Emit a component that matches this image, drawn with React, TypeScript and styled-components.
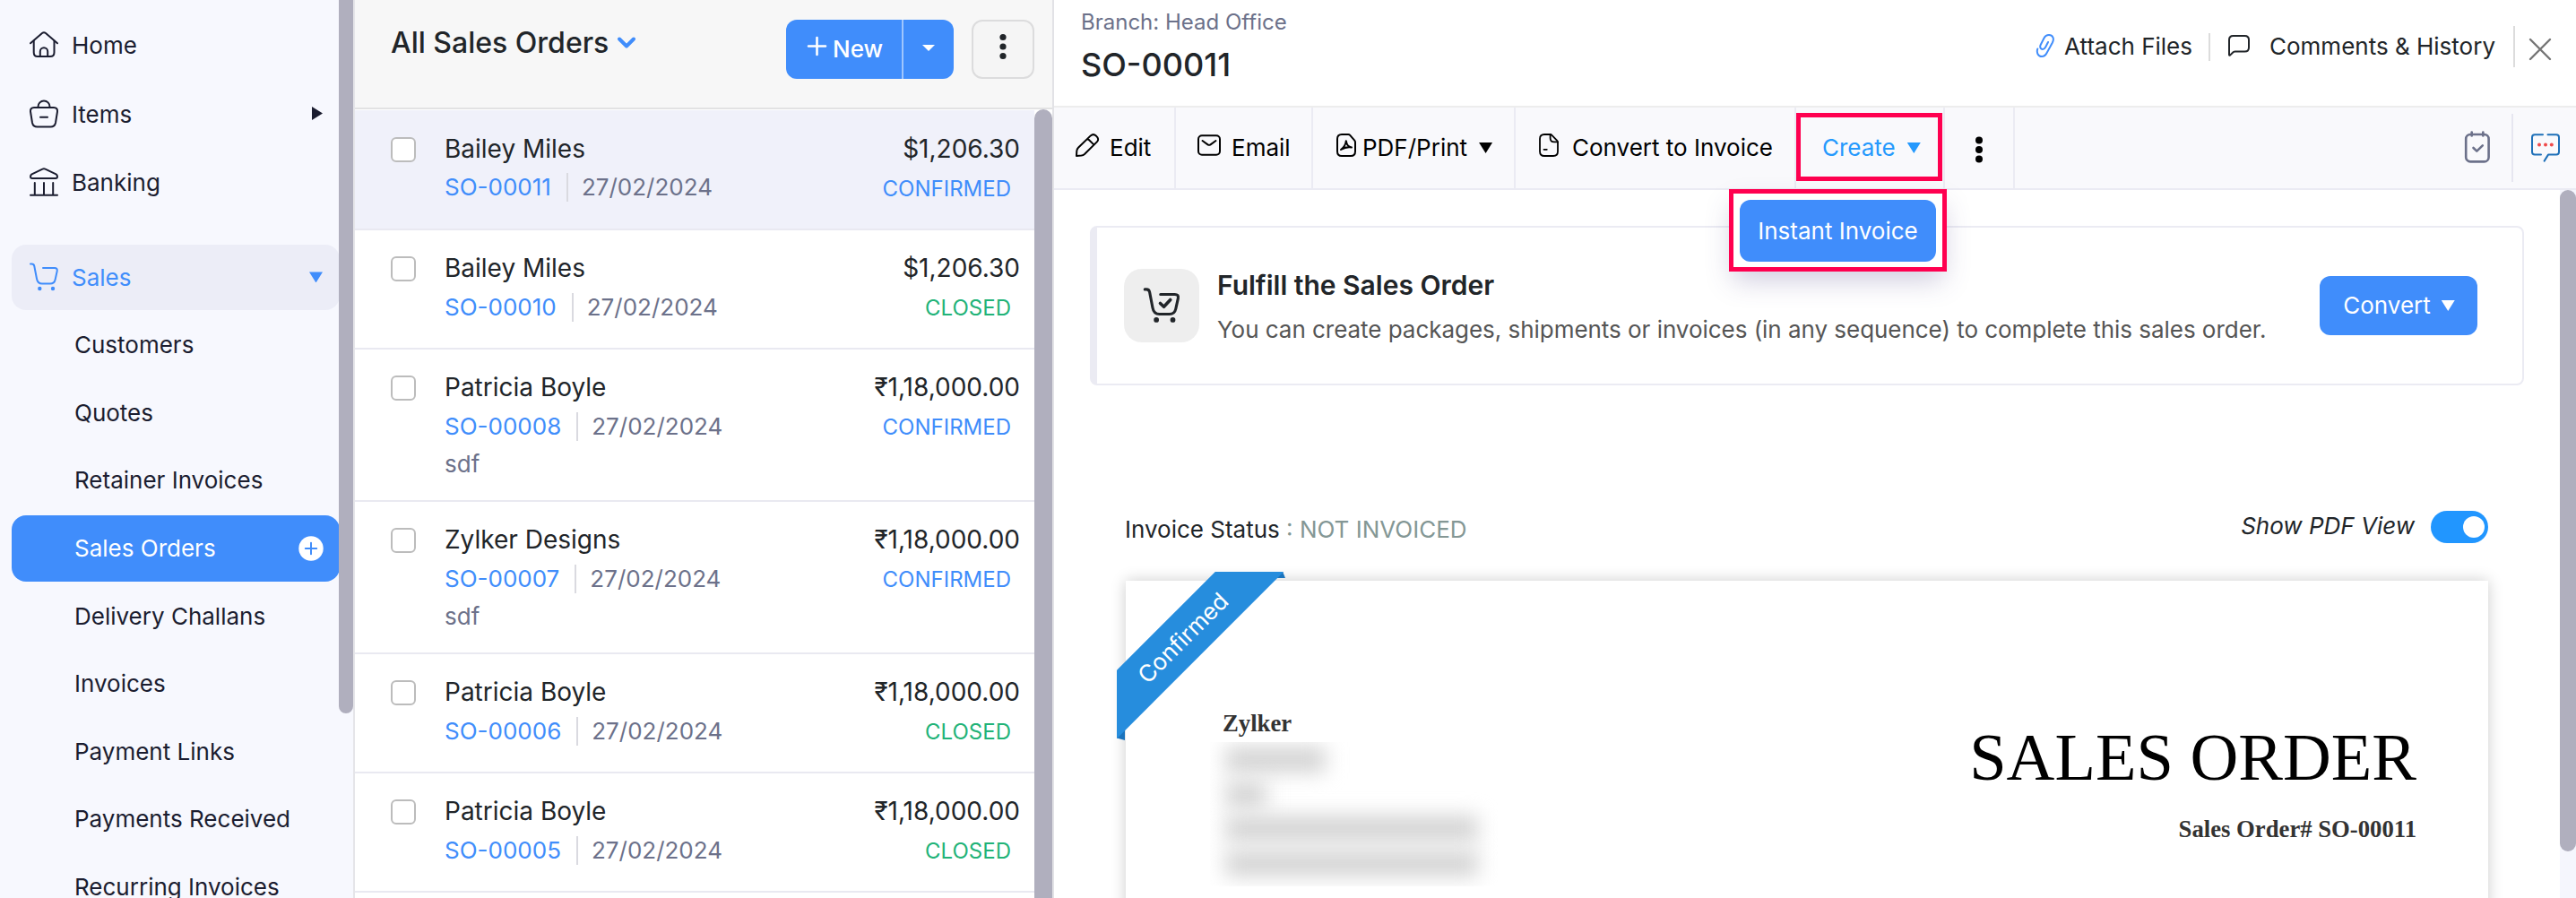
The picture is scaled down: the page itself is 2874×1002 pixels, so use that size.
import React from "react";
import styled, { createGlobalStyle } from "styled-components";

const BLUE = "#408dfb";
const SERIF = '"Liberation Serif", "Times New Roman", serif';

const GlobalStyle = createGlobalStyle`
  * { box-sizing: border-box; }
  body {
    margin: 0;
    overflow: hidden;
    background: #fff;
    color: #212529;
    font-family: Inter, "Liberation Sans", sans-serif;
    font-size: 26px;
    line-height: 32px;
    white-space: nowrap;
  }
  svg { display: block; flex: none; overflow: visible; }
`;

const Page = styled.div`
  display: flex;
  width: 2874px;
  height: 1002px;
  overflow: hidden;
`;

/* ---------- shared drawings ---------- */

const Svg = styled.svg.attrs((p) => ({
  fill: p.fill ?? "none",
  stroke: p.stroke ?? "currentColor",
  strokeWidth: p.strokeWidth ?? 2,
  strokeLinecap: "round" as const,
  strokeLinejoin: "round" as const,
}))<{ $w: number; $h: number }>`
  width: ${(p) => p.$w}px;
  height: ${(p) => p.$h}px;
`;

const Caret = styled.span<{ $w?: number; $h?: number; $right?: boolean; $push?: number }>`
  flex: none;
  width: ${(p) => p.$w ?? 15}px;
  height: ${(p) => p.$h ?? 12}px;
  margin-left: ${(p) => p.$push ?? 0}px;
  background: currentColor;
  clip-path: ${(p) => (p.$right ? "polygon(0 0, 100% 50%, 0 100%)" : "polygon(0 0, 100% 0, 50% 100%)")};
`;

const CART = "M1 1.5 H2.5 Q4.8 1.5 5.3 4 L8 18 Q9 23.6 14 23.6 H23 Q27.6 23.6 28.6 19 L30.7 9.5 Q31.4 6 27.8 6 H15";

const HomeIcon = () => (
  <Svg $w={32} $h={32} viewBox="0 0 32 32">
    <path d="M1 14.3 L14 3 Q16 1.6 18 3 L31 14.3" />
    <path d="M4.7 11.5 V24.5 Q4.7 29 9 29 H23 Q27.5 29 27.5 24.5 V11.5" />
    <path d="M11.8 29 V23.5 a4.2 4.2 0 0 1 8.4 0 V29" />
  </Svg>
);
const BasketIcon = () => (
  <Svg $w={32} $h={32} viewBox="0 0 32 32">
    <path d="M9.5 8.5 V8 a6.5 6.5 0 0 1 13 0 V8.5" />
    <path d="M5 9 H27 Q31.5 9.2 31 13.5 L29 26 Q28 30.6 23.5 30.6 H8.5 Q4 30.6 3 26 L1 13.5 Q.5 9.2 5 9Z" />
    <path d="M12 19.7 H20" />
  </Svg>
);
const BankIcon = () => (
  <Svg $w={32} $h={32} viewBox="0 0 32 32">
    <path d="M14.5 1.6 Q16 .8 17.5 1.6 L29.5 7.3 Q31 8.3 31 10 Q31 12 29 12 H3 Q1 12 1 10 Q1 8.3 2.5 7.3Z" />
    <path d="M5.8 17 V30 M16 17 V30 M26.2 17 V30 M1 30.8 H31" />
  </Svg>
);
const CartIcon = () => (
  <Svg $w={32} $h={32} viewBox="0 0 32 32">
    <path d={CART} />
    <circle cx="11.3" cy="29" r="2.2" fill="currentColor" stroke="none" />
    <circle cx="26" cy="29" r="2.2" fill="currentColor" stroke="none" />
  </Svg>
);
const CartCheckIcon = () => (
  <Svg $w={40} $h={40} viewBox="0 0 32 32" strokeWidth={2.5}>
    <path d={CART} />
    <path d="M14.8 14 L18 17 L23.8 10.8" strokeWidth={2.9} />
    <circle cx="11.3" cy="28.7" r="2.3" fill="currentColor" stroke="none" />
    <circle cx="26" cy="28.7" r="2.3" fill="currentColor" stroke="none" />
  </Svg>
);
const PencilIcon = () => (
  <Svg $w={26} $h={26} viewBox="0 0 26 26">
    <path d="M1 25 L1.3 19.5 Q1.5 17.3 3 15.8 L16.8 2.4 Q19.8 -.2 22.8 2.4 Q27 6.2 23.8 9.4 L10 23 Q8.5 24.4 6.5 24.6 Z M13.8 6 L20.6 12.6" />
  </Svg>
);
const MailIcon = () => (
  <Svg $w={26} $h={24} viewBox="0 0 26 24">
    <rect x="1" y="1.2" width="24" height="21.6" rx="4" />
    <path d="M5.5 7 L11.5 11.4 Q13 12.3 14.5 11.4 L20.5 7" />
  </Svg>
);
const PdfIcon = () => (
  <Svg $w={22} $h={26} viewBox="0 0 22 26">
    <path d="M6 1 H13.2 Q14.4 1 15.2 1.9 L20.2 7.6 Q21 8.5 21 9.7 V20 Q21 25 16 25 H6 Q1 25 1 20 V6 Q1 1 6 1Z" />
    <path d="M5 18 C8 16 10.4 12 10.8 8.2 C11.4 12 13.5 15.2 17 15.4 C13 14.6 8.6 15.8 5 18Z" />
  </Svg>
);
const DocIcon = () => (
  <Svg $w={22} $h={26} viewBox="0 0 22 26" strokeWidth={1.8}>
    <path d="M6 1 H12.6 Q13.6 1 14.4 1.9 L20.2 7.8 Q21 8.7 21 9.8 V20 Q21 25 16 25 H6 Q1 25 1 20 V6 Q1 1 6 1Z" />
    <path d="M12.6 1 V5 Q12.6 9.4 17 9.4 H21 M5.5 17.8 H8.8" />
  </Svg>
);
const ClipIcon = () => (
  <Svg $w={20} $h={26} viewBox="0 0 20 26">
    <path d="M1.3 16.5 C-.2 21 2 25 6 25 C9 25 10.6 23 11.6 21 L17.9 9.5 C20.2 5 18.2 1 14 1 C11 1 9.5 2.5 8.5 4.5 L4.7 12 C3.4 14.8 4.8 17 7 17 C8.6 17 9.4 16 10.2 14.5 L13 9" />
  </Svg>
);
const CommentIcon = () => (
  <Svg $w={24} $h={24} viewBox="0 0 24 24">
    <path d="M5.5 1 H18.5 Q23 1 23 5.5 V14 Q23 18.5 18.5 18.5 H7.5 Q6 18.5 5 19.7 L2 22.6 Q1 23.2 1 22 V5.5 Q1 1 5.5 1Z" />
  </Svg>
);
const CloseIcon = () => (
  <Svg $w={24} $h={24} viewBox="0 0 24 24" strokeWidth={2.4}>
    <path d="M1 1 L23 23 M23 1 L1 23" />
  </Svg>
);
const TaskIcon = () => (
  <Svg $w={30} $h={38} viewBox="0 0 30 38" strokeWidth={2.6}>
    <rect x="2.2" y="4" width="25.4" height="30.4" rx="5" />
    <path d="M8.7 1.5 V5.5 M21.3 1.5 V5.5 M10.5 19 L14.3 22.6 L20.8 16.4" />
  </Svg>
);
const ChatIcon = () => (
  <Svg $w={32} $h={32} viewBox="0 0 32 32" stroke="#1f70b8">
    <path d="M13 1.3 H4 Q1 1.3 1 4.3 V20.5 Q1 23.6 4 23.6 H11 M18.5 1.3 H28 Q31 1.3 31 4.3 V20.5 Q31 23.6 28 23.6 H19 L14.6 30.6" />
    <g fill="#ef4a4a" stroke="none">
      <circle cx="9" cy="12.6" r="2" />
      <circle cx="16" cy="12.6" r="2" />
      <circle cx="22.8" cy="12.6" r="2" />
    </g>
  </Svg>
);
const Dots = ({ r }: { r: number }) => (
  <Svg $w={8} $h={30} viewBox="0 0 8 30" fill="currentColor" stroke="none">
    <circle cx="4" cy="4.5" r={r} />
    <circle cx="4" cy="15" r={r} />
    <circle cx="4" cy="25.5" r={r} />
  </Svg>
);

/* ---------- sidebar ---------- */

const Sidebar = styled.aside`
  flex: none;
  display: flex;
  width: 396px;
  background: #f7f8fe;
  border-right: 2px solid #e5e5e9;
  color: #1b1d30;
`;
const Nav = styled.nav`
  width: 378px;
  padding-top: 12px;
  overflow: hidden;
`;
const NavItem = styled.div<{ $active?: boolean }>`
  display: flex;
  align-items: center;
  height: ${(p) => (p.$active ? 73 : 76.4)}px;
  width: 366px;
  margin: ${(p) => (p.$active ? "31.8px 0 0.7px 13px" : "0 0 0 13px")};
  padding: 0 19px 0 20px;
  border-radius: 16px;
  color: ${(p) => (p.$active ? BLUE : "inherit")};
  background: ${(p) => (p.$active ? "#ecedf7" : "transparent")};
`;
const NavLabel = styled.span`
  flex: 1;
  margin-left: 15px;
  padding-top: 2px;
`;
const SubItem = styled.div<{ $active?: boolean }>`
  display: flex;
  align-items: center;
  justify-content: space-between;
  width: 366px;
  height: ${(p) => (p.$active ? 74 : 75.6)}px;
  margin: ${(p) => (p.$active ? "1.2px 0 0.4px 13px" : "0 0 0 13px")};
  padding: ${(p) => (p.$active ? 0 : 1.4)}px 18px 0 70px;
  border-radius: 16px;
  color: ${(p) => (p.$active ? "#fff" : "inherit")};
  background: ${(p) => (p.$active ? BLUE : "transparent")};
`;
const AddBadge = () => (
  <Svg $w={28} $h={28} viewBox="0 0 28 28">
    <circle cx="14" cy="14" r="13.7" fill="#fff" stroke="none" />
    <path d="M14 7.8 V20.2 M7.8 14 H20.2" stroke={BLUE} />
  </Svg>
);
const Thumb = styled.div<{ $w: number; $h: string; $round: string }>`
  flex: none;
  width: ${(p) => p.$w}px;
  height: ${(p) => p.$h};
  border-radius: ${(p) => p.$round};
  background: #b0afbe;
`;

/* ---------- order list ---------- */

const ListPanel = styled.section`
  flex: none;
  display: flex;
  flex-direction: column;
  width: 780px;
  border-right: 2px solid #e2e2e6;
`;
const ListHeader = styled.header`
  flex: none;
  display: flex;
  align-items: flex-start;
  height: 122px;
  padding: 22px 20px 0 40px;
  background: #f7f7f7;
  border-bottom: 2px solid #e2e2e3;
`;
const ListTitle = styled.h1`
  flex: 1;
  display: flex;
  align-items: center;
  gap: 10px;
  margin: 6px 0 0;
  font-size: 32px;
  line-height: 40px;
  font-weight: 500;
`;
const SplitButton = styled.div`
  display: flex;
  width: 187px;
  height: 66px;
  margin-right: 20px;
  border-radius: 12px;
  background: ${BLUE};
  color: #fff;
  font-weight: 500;
`;
const NewPart = styled.div`
  display: flex;
  align-items: center;
  gap: 7px;
  width: 131px;
  padding-left: 24px;
  border-right: 2px solid #9fc6fd;
  svg { margin-bottom: 7px; }
`;
const CaretPart = styled.div`
  flex: 1;
  display: flex;
  justify-content: center;
  padding-top: 28px;
`;
const MoreButton = styled.div`
  display: flex;
  justify-content: center;
  width: 70px;
  height: 66px;
  padding-top: 13px;
  border: 2px solid #dcdcdd;
  border-radius: 12px;
  background: #f5f5f5;
`;
const ListBody = styled.div`
  flex: 1;
  display: flex;
  min-height: 0;
`;
const Rows = styled.div`
  width: 758px;
  padding-top: 1px;
  overflow: hidden;
`;
const Row = styled.article<{ $selected?: boolean; $tall?: boolean }>`
  display: flex;
  height: ${(p) => (p.$tall ? 170 : p.$selected ? 134 : 133)}px;
  padding: ${(p) => (p.$selected ? 26 : 25)}px 16px 0 40px;
  background: ${(p) => (p.$selected ? "#f0f1fa" : "#fff")};
  border-bottom: 2px solid #e9e9f1;
`;
const Checkbox = styled.span`
  flex: none;
  width: 28px;
  height: 28px;
  margin: 4px 32px 0 0;
  border: 2px solid #bcbcbc;
  border-radius: 6px;
  background: #fff;
`;
const RowMain = styled.div<{ $gap: number }>`
  flex: 1;
  display: flex;
  flex-direction: column;
  gap: ${(p) => p.$gap}px;
`;
const RowLine = styled.div<{ $big?: boolean }>`
  display: flex;
  align-items: center;
  justify-content: space-between;
  height: ${(p) => (p.$big ? 34 : 32)}px;
  font-size: ${(p) => (p.$big ? 28 : 26)}px;
  color: ${(p) => (p.$big ? "#212529" : "#6c718a")};
`;
const Meta = styled.span`
  display: flex;
  align-items: center;
`;
const OrderNo = styled.span`
  padding-right: 17px;
  margin-right: 15px;
  border-right: 2px solid #dadae0;
  color: ${BLUE};
`;
const Status = styled.span<{ $closed: boolean }>`
  margin-right: 10px;
  padding-top: 3px;
  font-size: 24px;
  color: ${(p) => (p.$closed ? "#22b378" : BLUE)};
`;

/* ---------- detail panel ---------- */

const Detail = styled.main`
  flex: 1;
  display: flex;
  flex-direction: column;
  min-width: 0;
`;
const DetailHeader = styled.header`
  flex: none;
  display: flex;
  justify-content: space-between;
  height: 120px;
  padding: 0 28px 0 30px;
  border-bottom: 2px solid #ededed;
`;
const Branch = styled.div`
  padding-top: 9px;
  font-size: 24px;
  color: #6c718a;
`;
const OrderTitle = styled.h2`
  margin: 8px 0 0;
  font-size: 36px;
  line-height: 46px;
  font-weight: 500;
`;
const HeaderActions = styled.div`
  display: flex;
  align-items: center;
  height: 104px;
  color: #212529;
`;
const Action = styled.span<{ $gap: number; $color?: string }>`
  display: flex;
  align-items: center;
  gap: ${(p) => p.$gap}px;
  svg { margin-bottom: 3px; color: ${(p) => p.$color ?? "inherit"}; }
`;
const Rule = styled.span<{ $h: number; $l: number; $r: number; $c?: string }>`
  width: 2px;
  height: ${(p) => p.$h}px;
  margin: 0 ${(p) => p.$r}px 0 ${(p) => p.$l}px;
  background: ${(p) => p.$c ?? "#dcdcdc"};
`;
const Close = styled.span`
  padding-top: 5px;
  color: #757575;
`;

const Toolbar = styled.div`
  flex: none;
  display: flex;
  height: 92px;
  background: #f9f9fc;
  border-bottom: 2px solid #ebebf3;
  color: #000;
`;
const Tool = styled.div<{ $w: number; $pad: number; $gap: number; $accent?: boolean }>`
  position: relative;
  display: flex;
  align-items: center;
  gap: ${(p) => p.$gap}px;
  width: ${(p) => p.$w}px;
  padding-left: ${(p) => p.$pad}px;
  border-right: 2px solid #ebebf3;
  color: ${(p) => (p.$accent ? "#2599fd" : "inherit")};
  svg { margin-bottom: 6px; }
`;
const MoreTool = styled.div`
  display: flex;
  align-items: center;
  justify-content: center;
  width: 78px;
  padding-top: 4px;
  border-right: 2px solid #ebebf3;
`;
const ToolbarEnd = styled.div`
  display: flex;
  align-items: center;
  margin-left: auto;
  padding-right: 18px;
  color: #6c718a;
`;
const Marker = styled.span`
  position: absolute;
  top: 6px;
  left: 0;
  width: 163px;
  height: 76px;
  border: 5px solid #ff0050;
`;
const Menu = styled.div`
  position: absolute;
  z-index: 2;
  top: 91px;
  left: -75px;
  width: 243px;
  height: 92px;
  padding: 7px;
  border: 5px solid #ff0050;
  background: #fff;
  box-shadow: 0 14px 30px -4px rgba(72, 60, 130, 0.26);
`;
const MenuItem = styled.div`
  display: flex;
  align-items: center;
  justify-content: center;
  height: 69px;
  width: 219px;
  border-radius: 12px;
  background: ${BLUE};
  color: #fff;
`;

const Scroll = styled.div`
  flex: 1;
  display: flex;
  min-height: 0;
`;
const Content = styled.div`
  width: 1680px;
  padding: 40px 40px 0;
  overflow: hidden;
`;
const Track = styled.div`
  width: 18px;
  background: #f5f6fd;
`;
const Banner = styled.section`
  display: flex;
  align-items: center;
  height: 178px;
  padding: 0 50px 0 30px;
  border: 2px solid #ebebf3;
  border-left-width: 8px;
  border-radius: 8px;
`;
const IconTile = styled.span`
  display: flex;
  align-items: center;
  justify-content: center;
  width: 84px;
  height: 82px;
  margin-right: 20px;
  border-radius: 20px;
  background: #eee;
`;
const BannerText = styled.div`
  flex: 1;
  display: flex;
  flex-direction: column;
  gap: 15px;
`;
const BannerTitle = styled.h3`
  margin: 0;
  font-size: 30px;
  line-height: 38px;
  font-weight: 600;
`;
const BannerNote = styled.p`
  margin: 0;
  letter-spacing: -0.035px;
  color: #555;
`;
const ConvertButton = styled.div`
  display: flex;
  align-items: center;
  justify-content: center;
  gap: 12px;
  width: 176px;
  height: 66px;
  padding-left: 1px;
  border-radius: 12px;
  background: ${BLUE};
  color: #fff;
`;
const StatusBar = styled.div`
  display: flex;
  align-items: center;
  justify-content: space-between;
  height: 42px;
  margin: 137px 40px 39px 39px;
`;
const InvoiceStatus = styled.span`
  padding-top: 5px;
  em { font-style: normal; color: #849795; }
`;
const PdfToggle = styled.span`
  display: flex;
  align-items: center;
  gap: 18px;
`;
const ToggleLabel = styled.span`
  padding-bottom: 3px;
  font-style: italic;
`;
const Switch = styled.span`
  display: flex;
  align-items: center;
  justify-content: flex-end;
  width: 64px;
  height: 36px;
  padding-right: 4px;
  border-radius: 18px;
  background: #2196ff;
  &::after {
    content: "";
    width: 24px;
    height: 24px;
    border-radius: 50%;
    background: #fff;
  }
`;
const Paper = styled.section`
  position: relative;
  display: flex;
  justify-content: space-between;
  width: 1520px;
  height: 420px;
  margin-left: 40px;
  padding: 0 80px 0 94px;
  box-shadow: 0 0 16px rgba(0, 0, 0, 0.2);
  background: #fff;
  font-family: ${SERIF};
  font-size: 26.7px;
  color: #333;
`;
const Ribbon = styled.div`
  position: absolute;
  top: -10px;
  left: -10px;
  width: 188px;
  height: 188px;
  overflow: hidden;
`;
const Fold = styled.span<{ $side: "top" | "left" }>`
  position: absolute;
  top: ${(p) => (p.$side === "top" ? 0 : 176)}px;
  left: ${(p) => (p.$side === "top" ? 170 : 0)}px;
  width: ${(p) => (p.$side === "top" ? 18 : 9)}px;
  height: ${(p) => (p.$side === "top" ? 7 : 12)}px;
  background: #1b74bd;
  clip-path: ${(p) => (p.$side === "top" ? "polygon(0 0, 84% 0, 100% 100%, 0 100%)" : "polygon(0 0, 100% 0, 100% 100%, 0 80%)")};
`;
const Band = styled.span`
  position: absolute;
  top: 47px;
  left: -76px;
  width: 300px;
  height: 54px;
  transform: rotate(-45deg);
  background: #268ddd;
  color: #fff;
  font: 26px/54px Inter, "Liberation Sans", sans-serif;
  text-align: center;
`;
const Sender = styled.div`
  padding-top: 141px;
`;
const SenderName = styled.div`
  padding-left: 14px;
  font-weight: 700;
  line-height: 36px;
`;
const Redacted = styled.div`
  width: 322px;
  height: 161px;
  margin-top: 3px;
  padding: 5px 0 0 17px;
  overflow: hidden;
`;
const Smear = styled.span<{ $w: number }>`
  display: block;
  width: ${(p) => p.$w}px;
  height: 29px;
  margin-bottom: 9.5px;
  background: #d4d4d4;
  filter: blur(11px);
`;
const DocTitle = styled.div`
  padding-top: 155px;
  text-align: right;
  font-weight: 700;
`;
const DocHeading = styled.div`
  font-size: 74.5px;
  line-height: 84px;
  margin-bottom: 22px;
  font-weight: 400;
  color: #000;
`;

const orders = [
  { name: "Bailey Miles", no: "SO-00011", amount: "$1,206.30", status: "CONFIRMED" },
  { name: "Bailey Miles", no: "SO-00010", amount: "$1,206.30", status: "CLOSED" },
  { name: "Patricia Boyle", no: "SO-00008", amount: "₹1,18,000.00", status: "CONFIRMED", ref: "sdf" },
  { name: "Zylker Designs", no: "SO-00007", amount: "₹1,18,000.00", status: "CONFIRMED", ref: "sdf" },
  { name: "Patricia Boyle", no: "SO-00006", amount: "₹1,18,000.00", status: "CLOSED" },
  { name: "Patricia Boyle", no: "SO-00005", amount: "₹1,18,000.00", status: "CLOSED" },
];

const salesLinks = [
  "Customers",
  "Quotes",
  "Retainer Invoices",
  "Sales Orders",
  "Delivery Challans",
  "Invoices",
  "Payment Links",
  "Payments Received",
  "Recurring Invoices",
];

export default function App() {
  return (
    <Page>
      <GlobalStyle />
      <Sidebar>
        <Nav>
          <NavItem><HomeIcon /><NavLabel>Home</NavLabel></NavItem>
          <NavItem><BasketIcon /><NavLabel>Items</NavLabel><Caret $right $w={12} $h={15} /></NavItem>
          <NavItem><BankIcon /><NavLabel>Banking</NavLabel></NavItem>
          <NavItem $active><CartIcon /><NavLabel>Sales</NavLabel><Caret /></NavItem>
          {salesLinks.map((label) => {
            const active = label === "Sales Orders";
            return (
              <SubItem key={label} $active={active}>
                {label}
                {active && <AddBadge />}
              </SubItem>
            );
          })}
        </Nav>
        <Thumb $w={16} $h="796px" $round="0 0 8px 8px" />
      </Sidebar>

      <ListPanel>
        <ListHeader>
          <ListTitle>
            All Sales Orders
            <Svg $w={20} $h={14} viewBox="0 0 20 14" stroke={BLUE} strokeWidth={4}>
              <path d="M2 2.5 L10 10.5 L18 2.5" />
            </Svg>
          </ListTitle>
          <SplitButton>
            <NewPart>
              <Svg $w={21} $h={21} viewBox="0 0 21 21" strokeWidth={2.6}>
                <path d="M10.5 1 V20 M1 10.5 H20" />
              </Svg>
              New
            </NewPart>
            <CaretPart><Caret $w={14} $h={7} /></CaretPart>
          </SplitButton>
          <MoreButton><Dots r={3.6} /></MoreButton>
        </ListHeader>
        <ListBody>
          <Rows>
            {orders.map((o, i) => (
              <Row key={o.no} $selected={i === 0} $tall={!!o.ref}>
                <Checkbox />
                <RowMain $gap={i === 0 ? 10 : 10.6}>
                  <RowLine $big><span>{o.name}</span><span>{o.amount}</span></RowLine>
                  <RowLine>
                    <Meta><OrderNo>{o.no}</OrderNo>27/02/2024</Meta>
                    <Status $closed={o.status === "CLOSED"}>{o.status}</Status>
                  </RowLine>
                  {o.ref && <RowLine>{o.ref}</RowLine>}
                </RowMain>
              </Row>
            ))}
          </Rows>
          <Thumb $w={20} $h="100%" $round="10px 10px 0 0" />
        </ListBody>
      </ListPanel>

      <Detail>
        <DetailHeader>
          <div>
            <Branch>Branch: Head Office</Branch>
            <OrderTitle>SO-00011</OrderTitle>
          </div>
          <HeaderActions>
            <Action $gap={11} $color={BLUE}><ClipIcon />Attach Files</Action>
            <Rule $h={31} $l={18} $r={20} />
            <Action $gap={22}><CommentIcon />Comments &amp; History</Action>
            <Rule $h={46} $l={20} $r={16} />
            <Close><CloseIcon /></Close>
          </HeaderActions>
        </DetailHeader>

        <Toolbar>
          <Tool $w={136} $pad={24} $gap={12}><PencilIcon />Edit</Tool>
          <Tool $w={153} $pad={24} $gap={12}><MailIcon />Email</Tool>
          <Tool $w={226} $pad={26} $gap={7}><PdfIcon />PDF/Print<Caret $push={6} /></Tool>
          <Tool $w={313} $pad={26} $gap={15}><DocIcon />Convert to Invoice</Tool>
          <Tool $w={166} $pad={29} $gap={13} $accent>
            Create
            <Caret />
            <Marker />
            <Menu><MenuItem>Instant Invoice</MenuItem></Menu>
          </Tool>
          <MoreTool><Dots r={4} /></MoreTool>
          <ToolbarEnd>
            <TaskIcon />
            <Rule $h={76} $l={23} $r={20} $c="#e6e6f0" />
            <ChatIcon />
          </ToolbarEnd>
        </Toolbar>

        <Scroll>
          <Content>
            <Banner>
              <IconTile><CartCheckIcon /></IconTile>
              <BannerText>
                <BannerTitle>Fulfill the Sales Order</BannerTitle>
                <BannerNote>You can create packages, shipments or invoices (in any sequence) to complete this sales order.</BannerNote>
              </BannerText>
              <ConvertButton>Convert<Caret /></ConvertButton>
            </Banner>
            <StatusBar>
              <InvoiceStatus>Invoice Status <em>: NOT INVOICED</em></InvoiceStatus>
              <PdfToggle><ToggleLabel>Show PDF View</ToggleLabel><Switch /></PdfToggle>
            </StatusBar>
            <Paper>
              <Sender>
                <SenderName>Zylker</SenderName>
                <Redacted>
                  <Smear $w={112} />
                  <Smear $w={46} />
                  <Smear $w={282} />
                  <Smear $w={282} />
                </Redacted>
              </Sender>
              <DocTitle>
                <DocHeading>SALES ORDER</DocHeading>
                Sales Order# SO-00011
              </DocTitle>
              <Ribbon>
                <Fold $side="top" />
                <Fold $side="left" />
                <Band>Confirmed</Band>
              </Ribbon>
            </Paper>
          </Content>
          <Track><Thumb $w={18} $h="738px" $round="9px" /></Track>
        </Scroll>
      </Detail>
    </Page>
  );
}
